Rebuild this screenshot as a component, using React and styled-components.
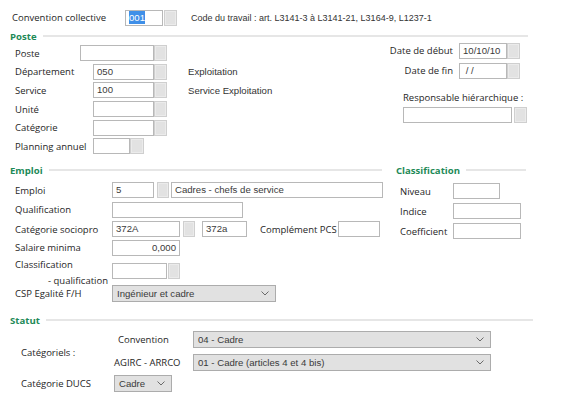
import React from 'react';
import styled, { createGlobalStyle } from 'styled-components';

const GlobalStyle = createGlobalStyle`
  html, body { margin: 0; padding: 0; background: #fff; }
  body { font-family: "Open Sans", "Noto Sans", sans-serif; color: #262626; }
  * { box-sizing: border-box; }
`;

const Page = styled.div`
  width: 576px;
  height: 412px;
  padding-top: 9px;
  overflow: hidden;
`;

const Row = styled.div`
  display: flex;
  align-items: ${p => p.$align || 'center'};
  height: ${p => p.$h}px;
  padding-left: ${p => p.$pl || 0}px;
  margin-top: ${p => p.$mt || 0}px;
`;

const Label = styled.span`
  flex: none;
  width: ${p => p.$w}px;
  padding-left: ${p => p.$pl || 0}px;
  padding-top: ${p => p.$pt || 0}px;
  margin-left: ${p => p.$ml || 0}px;
  font-size: 9.5px;
  line-height: ${p => p.$lh || 'normal'};
  white-space: nowrap;
  text-align: ${p => (p.$right ? 'right' : 'left')};
`;

const Indent = styled.span`
  display: block;
  padding-left: 33px;
`;

const TextBox = styled.div`
  flex: none;
  width: ${p => p.$w}px;
  height: 16px;
  margin-left: ${p => p.$ml || 0}px;
  margin-top: ${p => p.$mt || 0}px;
  border: 1px solid #b8b8b8;
  background: #fff;
  padding: 0 3px;
  font-family: "Liberation Sans", Arial, sans-serif;
  font-size: 9.6px;
  font-weight: 400;
  line-height: 14px;
  color: #3a3a3a;
  text-align: ${p => p.$align || 'left'};
  white-space: nowrap;
  overflow: hidden;
`;

const Selected = styled.span`
  background: #3f8fe8;
  color: #fff;
  padding: 1px 0;
`;

const LookupBtn = styled.span`
  flex: none;
  width: ${p => p.$w || 13}px;
  height: 16px;
  margin-left: ${p => p.$ml || 0}px;
  margin-top: ${p => p.$mt || 0}px;
  background: #e2e2e2;
  border: 1px solid #cfcfcf;
  box-shadow: inset 0 0 0 1px #ebebeb;
`;

const Note = styled.span`
  margin-left: ${p => p.$ml || 0}px;
  font-family: "Liberation Sans", Arial, sans-serif;
  font-size: ${p => p.$fs || 9.6}px;
  color: #333;
  white-space: nowrap;
`;

const SectionHeader = styled.div`
  display: flex;
  align-items: center;
  gap: 6px;
  width: ${p => p.$w}px;
  height: 10px;
  margin-left: ${p => p.$ml || 0}px;
  margin-top: ${p => p.$mt || 0}px;
  color: #1e8a58;
  font-weight: 700;
  font-size: 9.6px;
  &::after {
    content: '';
    flex: 1;
    height: 2px;
    background: #e6e6e6;
  }
`;

const PosteBody = styled.div`
  display: grid;
  grid-template-columns: 370px 148px;
  height: 124px;
  margin-left: 10px;
`;

const Column = styled.div`
  display: flex;
  flex-direction: column;
  padding-top: ${p => p.$pt || 0}px;
  padding-left: ${p => p.$pl || 0}px;
`;

const MidGrid = styled.div`
  display: grid;
  grid-template-columns: 372px 130px;
  column-gap: 14px;
  height: 150px;
  margin-left: 10px;
`;

const SelectBox = styled.div`
  flex: none;
  display: flex;
  align-items: center;
  justify-content: space-between;
  width: ${p => p.$w}px;
  height: 17px;
  padding: 0 6px 0 4px;
  background: #e1e1e1;
  border: 1px solid #acacac;
  font-family: "Liberation Sans", Arial, sans-serif;
  font-size: 9.6px;
  color: #3a3a3a;
  white-space: nowrap;
`;

const Chevron = () => (
  <svg width="8" height="5" viewBox="0 0 8 5">
    <polyline points="0.5,0.5 4,4 7.5,0.5" fill="none" stroke="#6a6a6a" strokeWidth="1" />
  </svg>
);

const Select = ({ w, children }) => (
  <SelectBox $w={w}>
    <span>{children}</span>
    <Chevron />
  </SelectBox>
);

const StatutBody = styled.div`
  padding-top: 5px;
  padding-left: 21px;
`;

const Stack = styled.div`
  display: flex;
  flex-direction: column;
  gap: 5px;
`;

const CatRow = styled.div`
  display: flex;
  align-items: center;
`;

export default function App() {
  return (
    <Page>
      <GlobalStyle />
      <Row $h={17} $pl={12}>
        <Label $w={113}>Convention collective</Label>
        <TextBox $w={38}><Selected>001</Selected></TextBox>
        <LookupBtn $ml={1} />
        <Note $ml={14} $fs={9}>Code du travail : art. L3141-3 à L3141-21, L3164-9, L1237-1</Note>
      </Row>

      <SectionHeader $w={518} $ml={10} $mt={5}>Poste</SectionHeader>
      <PosteBody>
        <Column $pt={3} $pl={5}>
          <Row $h={18.6}>
            <Label $w={65}>Poste</Label>
            <TextBox $w={74} />
            <LookupBtn />
          </Row>
          <Row $h={18.6}>
            <Label $w={78}>Département</Label>
            <TextBox $w={61}>050</TextBox>
            <LookupBtn />
            <Note $ml={21}>Exploitation</Note>
          </Row>
          <Row $h={18.6}>
            <Label $w={78}>Service</Label>
            <TextBox $w={61}>100</TextBox>
            <LookupBtn />
            <Note $ml={21}>Service Exploitation</Note>
          </Row>
          <Row $h={18.6}>
            <Label $w={78}>Unité</Label>
            <TextBox $w={61} />
            <LookupBtn />
          </Row>
          <Row $h={18.6}>
            <Label $w={78}>Catégorie</Label>
            <TextBox $w={61} />
            <LookupBtn />
          </Row>
          <Row $h={18.6}>
            <Label $w={78}>Planning annuel</Label>
            <TextBox $w={37} />
            <LookupBtn $w={14} />
          </Row>
        </Column>
        <Column $pt={1}>
          <Row $h={17}>
            <Label $w={73} $right>Date de début</Label>
            <TextBox $w={48} $ml={6}>10/10/10</TextBox>
            <LookupBtn />
          </Row>
          <Row $h={17} $mt={3}>
            <Label $w={73} $right>Date de fin</Label>
            <TextBox $w={48} $ml={6}>&nbsp;/ /</TextBox>
            <LookupBtn />
          </Row>
          <Row $h={12} $mt={12} $pl={23}>
            <Label $w={120}>Responsable hiérarchique :</Label>
          </Row>
          <Row $h={16} $mt={4} $pl={23}>
            <TextBox $w={109} />
            <LookupBtn $ml={2} />
          </Row>
        </Column>
      </PosteBody>

      <MidGrid>
        <div>
          <SectionHeader $w={372}>Emploi</SectionHeader>
          <Column $pt={6} $pl={5}>
            <Row $h={18}>
              <Label $w={97}>Emploi</Label>
              <TextBox $w={42}>5</TextBox>
              <LookupBtn $ml={3} $w={12} />
              <TextBox $w={212} $ml={2}>Cadres - chefs de service</TextBox>
            </Row>
            <Row $h={21}>
              <Label $w={97}>Qualification</Label>
              <TextBox $w={131} />
            </Row>
            <Row $h={18}>
              <Label $w={97}>Catégorie sociopro</Label>
              <TextBox $w={68}>372A</TextBox>
              <LookupBtn $ml={3} $w={12} />
              <TextBox $w={45} $ml={7}>372a</TextBox>
              <Label $w={78} $ml={13}>Complément PCS</Label>
              <TextBox $w={42} />
            </Row>
            <Row $h={19}>
              <Label $w={97}>Salaire minima</Label>
              <TextBox $w={68} $align="right">0,000</TextBox>
            </Row>
            <Row $h={27} $align="flex-start">
              <Label $w={97} $lh="16px">
                Classification
                <Indent>- qualification</Indent>
              </Label>
              <TextBox $w={55} $mt={6} />
              <LookupBtn $ml={1} $w={12} $mt={6} />
            </Row>
            <Row $h={18}>
              <Label $w={97}>CSP Egalité F/H</Label>
              <Select w={164}>Ingénieur et cadre</Select>
            </Row>
          </Column>
        </div>
        <div>
          <SectionHeader $w={130}>Classification</SectionHeader>
          <Column $pt={6} $pl={4}>
            <Row $h={20}>
              <Label $w={53}>Niveau</Label>
              <TextBox $w={47} />
            </Row>
            <Row $h={20}>
              <Label $w={53}>Indice</Label>
              <TextBox $w={68} />
            </Row>
            <Row $h={20}>
              <Label $w={53}>Coefficient</Label>
              <TextBox $w={68} />
            </Row>
          </Column>
        </div>
      </MidGrid>

      <SectionHeader $w={523} $ml={10}>Statut</SectionHeader>
      <StatutBody>
        <CatRow>
          <Label $w={93} $pt={4}>Catégoriels :</Label>
          <Stack>
            <Row $h={18}>
              <Label $w={79} $pl={4}>Convention</Label>
              <Select w={298}>04 - Cadre</Select>
            </Row>
            <Row $h={18}>
              <Label $w={79}>AGIRC - ARRCO</Label>
              <Select w={298}>01 - Cadre (articles 4 et 4 bis)</Select>
            </Row>
          </Stack>
        </CatRow>
        <Row $h={18} $mt={3}>
          <Label $w={93}>Catégorie DUCS</Label>
          <Select w={58}>Cadre</Select>
        </Row>
      </StatutBody>
    </Page>
  );
}
